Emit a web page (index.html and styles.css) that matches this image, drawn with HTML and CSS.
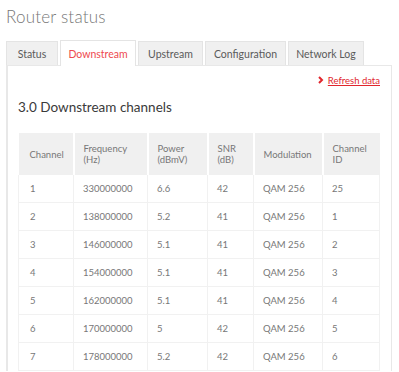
FILE: index.html
```html
<!DOCTYPE html>
<html lang="en">

<head>
    <meta charset="UTF-8">
    <meta name="viewport" content="width=device-width, initial-scale=1.0">
    <title>Router status</title>
    <link rel="stylesheet" href="styles.css">
</head>

<body>
    <div class="page">
        <h1>Router status</h1>

        <ul class="tabs">
            <li class="tab t-status">Status</li>
            <li class="tab t-down active">Downstream</li>
            <li class="tab t-up">Upstream</li>
            <li class="tab t-conf">Configuration</li>
            <li class="tab t-log">Network Log</li>
        </ul>

        <div class="panel">
            <div class="refresh">
                <a href="#">
                    <svg width="6" height="8" viewBox="0 0 6 8"><path d="M1 1 L4 4 L1 7" fill="none" stroke="#e1262d" stroke-width="2"/></svg>
                    <span>Refresh data</span>
                </a>
            </div>

            <h2>3.0 Downstream channels</h2>

            <table class="channels">
                <thead>
                    <tr>
                        <th class="c-ch">Channel</th>
                        <th class="c-freq">Frequency<br>(Hz)</th>
                        <th class="c-pow">Power<br>(dBmV)</th>
                        <th class="c-snr">SNR<br>(dB)</th>
                        <th class="c-mod">Modulation</th>
                        <th class="c-id">Channel<br>ID</th>
                    </tr>
                </thead>
                <tbody>
                    <tr><td>1</td><td>330000000</td><td>6.6</td><td>42</td><td>QAM 256</td><td>25</td></tr>
                    <tr><td>2</td><td>138000000</td><td>5.2</td><td>41</td><td>QAM 256</td><td>1</td></tr>
                    <tr><td>3</td><td>146000000</td><td>5.1</td><td>41</td><td>QAM 256</td><td>2</td></tr>
                    <tr><td>4</td><td>154000000</td><td>5.1</td><td>41</td><td>QAM 256</td><td>3</td></tr>
                    <tr><td>5</td><td>162000000</td><td>5.1</td><td>41</td><td>QAM 256</td><td>4</td></tr>
                    <tr><td>6</td><td>170000000</td><td>5</td><td>42</td><td>QAM 256</td><td>5</td></tr>
                    <tr><td>7</td><td>178000000</td><td>5.2</td><td>42</td><td>QAM 256</td><td>6</td></tr>
                </tbody>
            </table>
        </div>
    </div>
</body>

</html>
```

FILE: styles.css
```css
body {
    font-family: Lato, "Open Sans", sans-serif;
    background-color: #fff;
    color: #555;
    margin: 0;
    padding: 0;
}

.page {
    padding: 0 7px 0 6px;
}

h1 {
    margin: 0;
    padding-top: 6px;
    height: 33px;
    font-size: 17px;
    font-weight: 300;
    color: #777;
    letter-spacing: 0.2px;
}

/* Tabs */
.tabs {
    list-style: none;
    margin: 0;
    padding: 0;
    display: flex;
    gap: 2px;
    align-items: flex-end;
    height: 26px;
}

.tab {
    box-sizing: border-box;
    height: 24px;
    line-height: 24px;
    text-align: center;
    white-space: nowrap;
    background-color: #f0f0f0;
    border: 1px solid #e4e4e4;
    border-bottom: none;
    font-size: 10.5px;
    color: #5a5a5a;
}

.t-status { width: 52px; }
.t-down { width: 76px; }
.t-up { width: 65px; }
.t-conf { width: 81px; }
.t-log { width: 76px; }

.tab.active {
    height: 26px;
    line-height: 26px;
    background-color: #fff;
    color: #ee4a4f;
    margin-bottom: -1px;
    position: relative;
}

/* Panel */
.panel {
    border: 1px solid #e8e8e8;
    border-bottom: none;
    border-left-width: 2px;
    padding: 9px 11px 0 10px;
}

.refresh {
    text-align: right;
    font-size: 9.5px;
    height: 15px;
}

.refresh a {
    color: #e1262d;
    text-decoration: none;
}

.refresh span {
    text-decoration: underline;
}

.refresh svg {
    margin-right: 1px;
}

h2 {
    margin: 0;
    padding-top: 9px;
    height: 34px;
    font-size: 13.5px;
    font-weight: 400;
    color: #3a3a3a;
}

/* Table */
.channels {
    width: 100%;
    border-collapse: collapse;
    font-size: 9.5px;
    color: #777;
}

.channels th {
    background-color: #f0f0f0;
    border-left: 2px solid #fff;
    font-weight: 400;
    text-align: left;
    height: 42px;
    line-height: 11px;
    padding: 0 8px 0 9px;
    box-sizing: border-box;
    color: #777;
}

.channels th:first-child {
    border-left: none;
    padding-left: 11px;
}

.channels td {
    height: 27px;
    padding: 0 8px 0 9px;
    border: 1px solid #f1f1f1;
    border-top: none;
}

.channels td:first-child {
    padding-left: 11px;
}

.c-ch { width: 55px; }
.c-freq { width: 74px; }
.c-pow { width: 60px; }
.c-snr { width: 46px; }
.c-mod { width: 69px; }
```
